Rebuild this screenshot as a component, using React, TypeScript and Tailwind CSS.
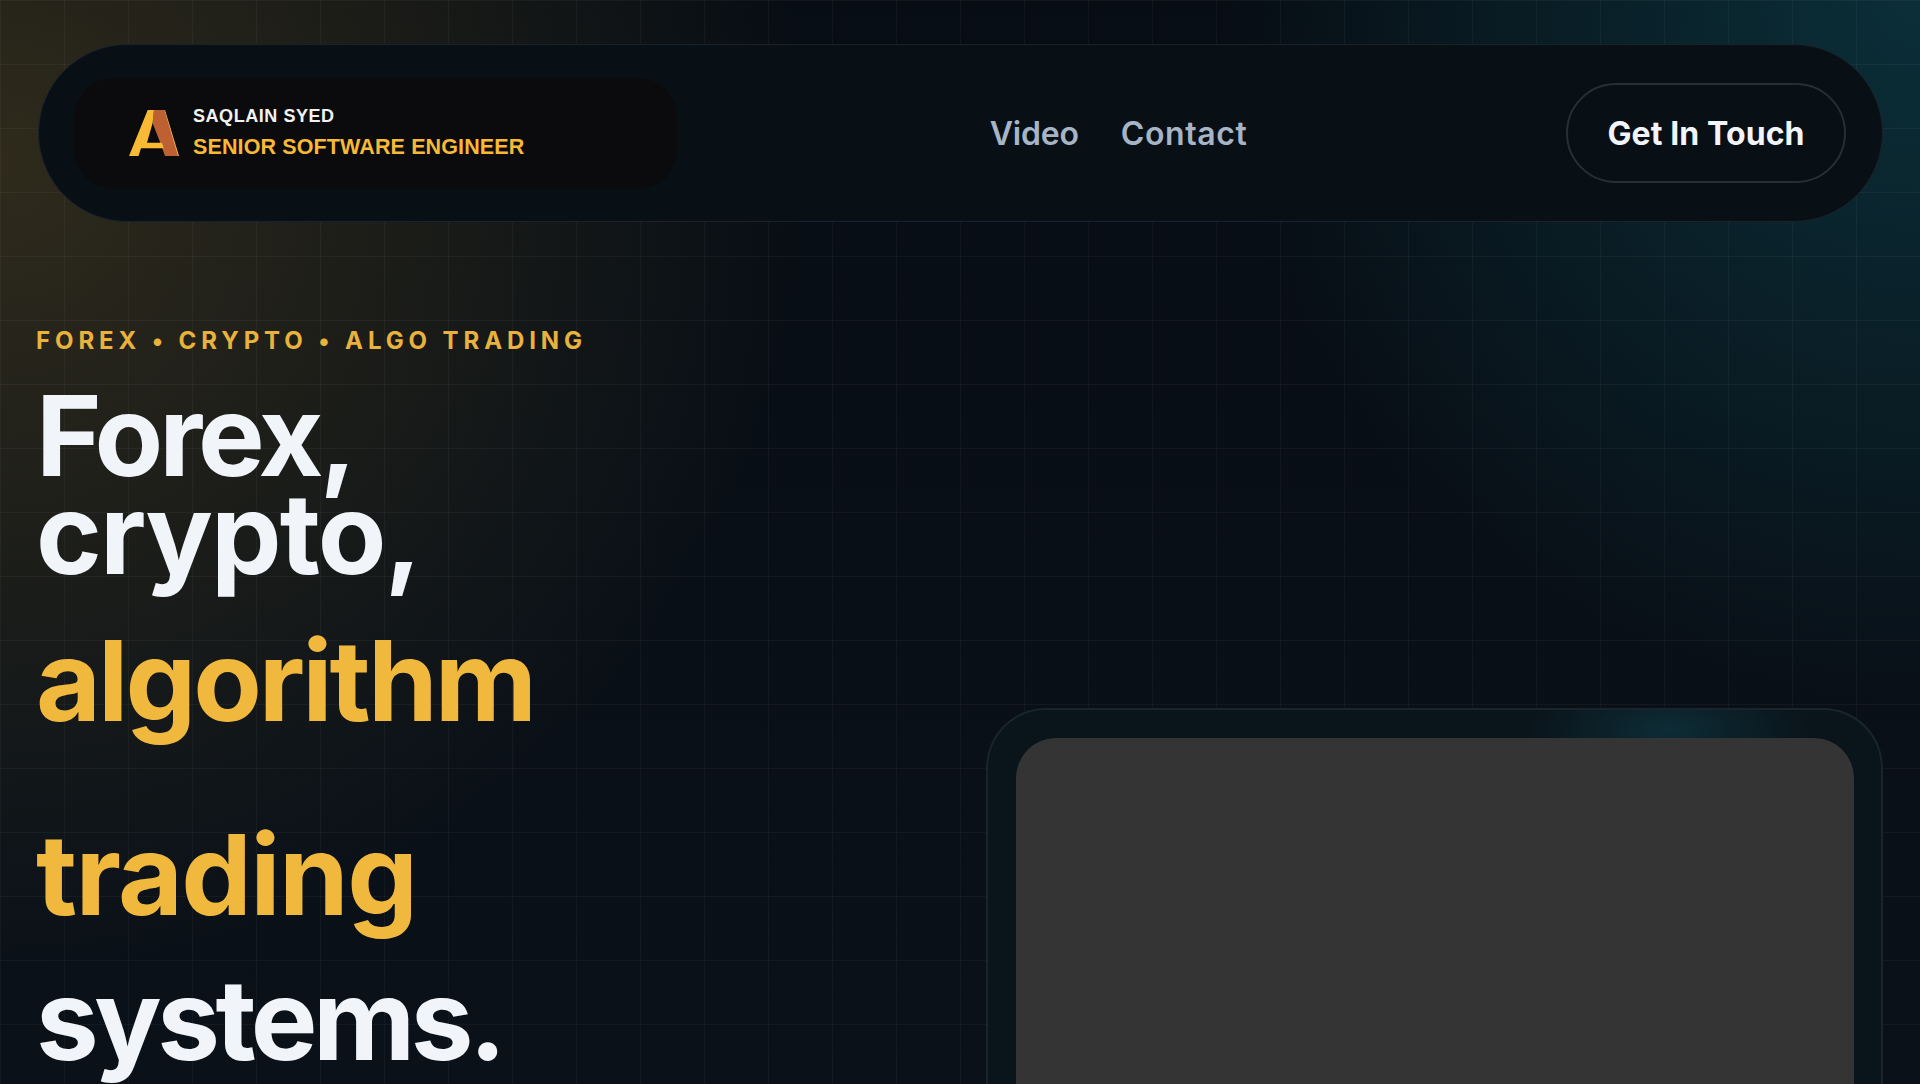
// Landing hero: nav pill, headline and video card on a dark grid
const headingFont = "font-['Inter',sans-serif]";

function LogoMark() {
  return (
    <svg width="50" height="46" viewBox="0 0 50 46" className="shrink-0" aria-hidden="true">
      <polygon points="35,0 36,0 50,46 48,46" fill="#f5b93a" />
      <polygon points="25,0 35.3,0 49,46 36,46 31.3,32.7 23.6,13" fill="#bd6132" />
      <polygon points="18.7,0 25,0 23.6,13 18,32.7 33,32.7 34.7,38.3 12,38.3 9.5,46 0,46" fill="#f8b935" />
    </svg>
  );
}

function Brand() {
  return (
    <div className="flex h-[111px] w-[603px] items-center rounded-[40px] bg-[#0b0b0d] pl-[55px] font-['Liberation_Sans',sans-serif] font-bold">
      <LogoMark />
      <div className="ml-[14px] flex flex-col">
        <span className="mt-[-2px] text-[18px] leading-[22px] tracking-[0.55px] text-[#f2f2f2]">SAQLAIN SYED</span>
        <span className="mt-[8px] text-[21.5px] leading-[24px] tracking-[0.12px] text-[#f8b935]">SENIOR SOFTWARE ENGINEER</span>
      </div>
    </div>
  );
}

function Navbar() {
  return (
    <header className="flex h-[178px] items-center justify-between rounded-[89px] border border-[#1a232c] bg-[#080f15] pl-[35px] pr-[36px]">
      <Brand />
      <nav className={`ml-[-6px] mt-[2px] flex items-center gap-[42px] text-[32px] font-semibold text-[#a6b4c5] ${headingFont}`}>
        <a className="tracking-[-0.2px]">Video</a>
        <a className="tracking-[0.6px]">Contact</a>
      </nav>
      <button className={`flex h-[100px] w-[280px] items-center justify-center rounded-full border-2 border-[#262f38] pt-[2px] text-[32px] font-bold tracking-[0.1px] text-[#f1f5f9] ${headingFont}`}>
        Get In Touch
      </button>
    </header>
  );
}

function Headline() {
  return (
    <h1 className={`text-[112px] font-bold text-[#f1f5f9] ${headingFont}`}>
      <span className="block h-[98px] leading-[98px] tracking-[-4px]">Forex,</span>
      <span className="block h-[98px] leading-[98px] tracking-[-1.9px]">crypto,</span>
      <span className="mt-[49px] block h-[98px] leading-[98px] tracking-[-3px] text-[#f0b93e]">algorithm</span>
      <span className="mt-[96px] block h-[98px] leading-[98px] tracking-[-1.6px] text-[#f0b93e]">trading</span>
      <span className="mt-[47px] block h-[98px] leading-[98px] tracking-[-4.5px]">systems.</span>
    </h1>
  );
}

function VideoCard() {
  return (
    <div className="relative h-[600px] w-[897px] overflow-hidden rounded-t-[60px] border-x-2 border-t-2 border-[#1a242d] bg-[#0a141b] pl-[28px] pr-[27px] pt-[28px]">
      <div className="absolute right-[72px] top-[-40px] h-[120px] w-[280px] rounded-full bg-[radial-gradient(closest-side,rgba(20,100,115,0.3),transparent)]" />
      <div className="relative h-full rounded-t-[40px] bg-[#343434]" />
    </div>
  );
}

export default function App() {
  return (
    <div className="h-[1084px] overflow-hidden bg-[linear-gradient(to_right,rgba(255,255,255,0.04)_1px,transparent_1px),linear-gradient(to_bottom,rgba(255,255,255,0.04)_1px,transparent_1px),radial-gradient(circle_at_0%_15%,rgba(240,185,62,0.17),transparent_38%),radial-gradient(circle_at_100%_0%,rgba(20,125,140,0.3),transparent_32%),linear-gradient(to_bottom,#070d14,#0a1119)] bg-[size:64px_64px,64px_64px,100%_100%,100%_100%,100%_100%] pl-[38px] pr-[37px] pt-[44px]">
      <Navbar />
      <main className="flex items-start justify-between">
        <section className="ml-[-2px] pt-[104px]">
          <p className="mb-[30px] text-[24px] font-bold leading-[30px] tracking-[4.9px] text-[#e9b23c] font-['Inter',sans-serif]">
            FOREX • CRYPTO • ALGO TRADING
          </p>
          <Headline />
        </section>
        <section className="pt-[486px]">
          <VideoCard />
        </section>
      </main>
    </div>
  );
}
